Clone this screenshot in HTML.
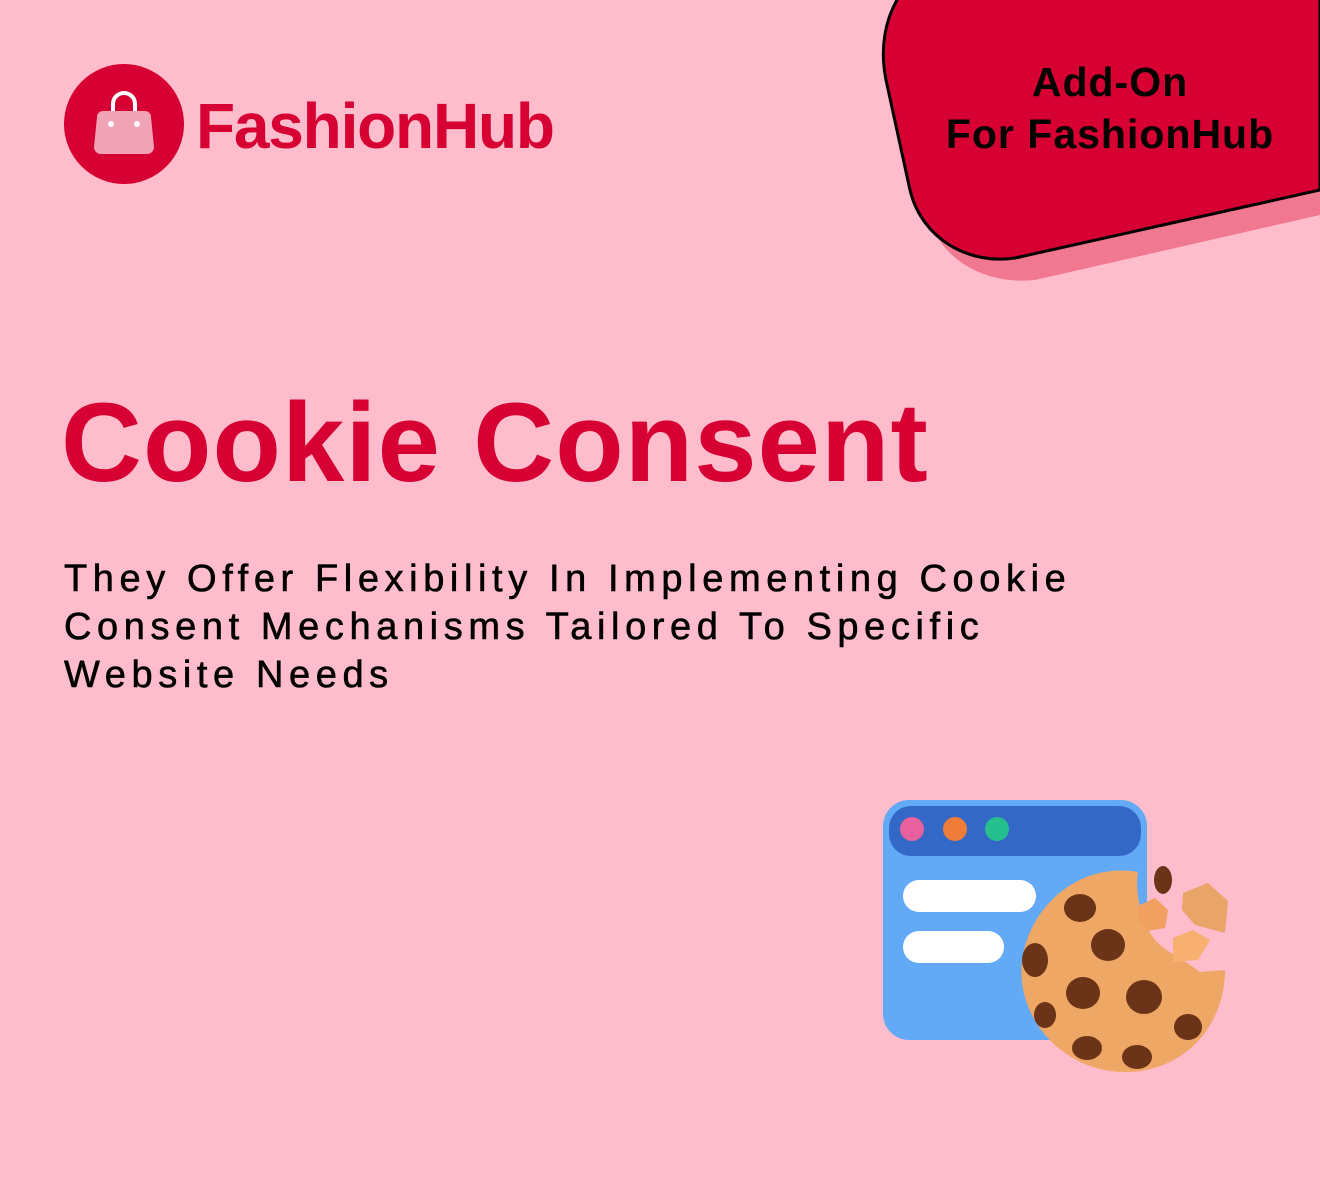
<!DOCTYPE html>
<html><head><meta charset="utf-8"><style>
html,body{margin:0;padding:0}
body{width:1320px;height:1200px;background:#ffbccd;position:relative;overflow:hidden;font-family:"Liberation Sans",sans-serif}
.abs{position:absolute;white-space:nowrap}
</style></head><body>
<svg class="abs" style="left:0;top:0" width="1320" height="1200" viewBox="0 0 1320 1200">
  <path d="M905 20 C895 40 897 70 903 95 L928 215 C940 260 985 285 1035 280 L1320 215 L1320 20 Z" fill="#f07890"/>
  <path d="M900 -5 C884 20 880 50 886 80 L910 190 C922 240 970 265 1015 258 L1320 190 L1320 -5 Z" fill="#d60032" stroke="#000" stroke-width="3"/>
  <circle cx="124" cy="124" r="60" fill="#d60032"/>
  <path d="M113 113 V104 a11 11 0 0 1 22 0 V113" fill="none" stroke="#fff" stroke-width="4"/>
  <path d="M103 111 H145 a6 6 0 0 1 6 6 L154 147 a7 7 0 0 1 -7 7 H101 a7 7 0 0 1 -7 -7 L97 117 a6 6 0 0 1 6 -6Z" fill="#efa3b4"/>
  <circle cx="111" cy="124" r="3" fill="#fff"/><circle cx="137" cy="124" r="3" fill="#fff"/>
  <rect x="883" y="800" width="264" height="240" rx="26" fill="#63aaf6"/>
  <rect x="889" y="806" width="252" height="50" rx="22" fill="#3368c6"/>
  <circle cx="912" cy="829" r="12" fill="#e8609c"/>
  <circle cx="955" cy="829" r="12" fill="#f07c3a"/>
  <circle cx="997" cy="829" r="12" fill="#25c08e"/>
  <rect x="903" y="880" width="133" height="32" rx="16" fill="#fff"/>
  <rect x="903" y="931" width="101" height="32" rx="16" fill="#fff"/>
  <path d="M1138 872 C1080 862 1030 905 1022 960 C1015 1020 1065 1072 1125 1072 C1185 1072 1225 1025 1225 970 L1200 972 C1185 960 1170 955 1155 940 C1140 920 1135 890 1138 872Z" fill="#eea764"/>
  <g fill="#6b3318">
    <ellipse cx="1080" cy="908" rx="16" ry="14"/>
    <ellipse cx="1108" cy="945" rx="17" ry="16"/>
    <ellipse cx="1035" cy="960" rx="13" ry="17"/>
    <ellipse cx="1083" cy="993" rx="17" ry="16"/>
    <ellipse cx="1144" cy="997" rx="18" ry="17"/>
    <ellipse cx="1045" cy="1015" rx="11" ry="13"/>
    <ellipse cx="1188" cy="1027" rx="14" ry="13"/>
    <ellipse cx="1087" cy="1048" rx="15" ry="12"/>
    <ellipse cx="1137" cy="1057" rx="15" ry="12"/>
    <ellipse cx="1163" cy="880" rx="9" ry="14"/>
  </g>
  <path d="M1140 905 l15 -7 l13 12 l-3 18 l-18 3 l-9 -12Z" fill="#f0a060"/>
  <path d="M1183 893 l25 -10 l20 18 l-3 32 l-30 -8 l-13 -15Z" fill="#e9a468"/>
  <path d="M1173 938 l20 -8 l17 10 l-12 20 l-25 2Z" fill="#f7b070"/>
</svg>
<div class="abs" style="left:196px;top:88px;font-size:64px;font-weight:bold;color:#d60032;letter-spacing:-1.2px;line-height:76px">FashionHub</div>
<div class="abs" style="left:930px;top:56px;width:360px;text-align:center;font-size:41px;font-weight:bold;color:#000;line-height:52px;letter-spacing:1px">Add-On<br>For FashionHub</div>
<div class="abs" style="left:61px;top:378px;font-size:112px;font-weight:bold;color:#d60032;line-height:130px;letter-spacing:1.1px">Cookie Consent</div>
<div class="abs" style="left:64px;top:555px;font-size:38px;color:#000;line-height:48px;letter-spacing:5.6px;font-weight:normal;-webkit-text-stroke:0.6px #000">They Offer Flexibility In Implementing Cookie<br>Consent Mechanisms Tailored To Specific<br>Website Needs</div>
</body></html>
